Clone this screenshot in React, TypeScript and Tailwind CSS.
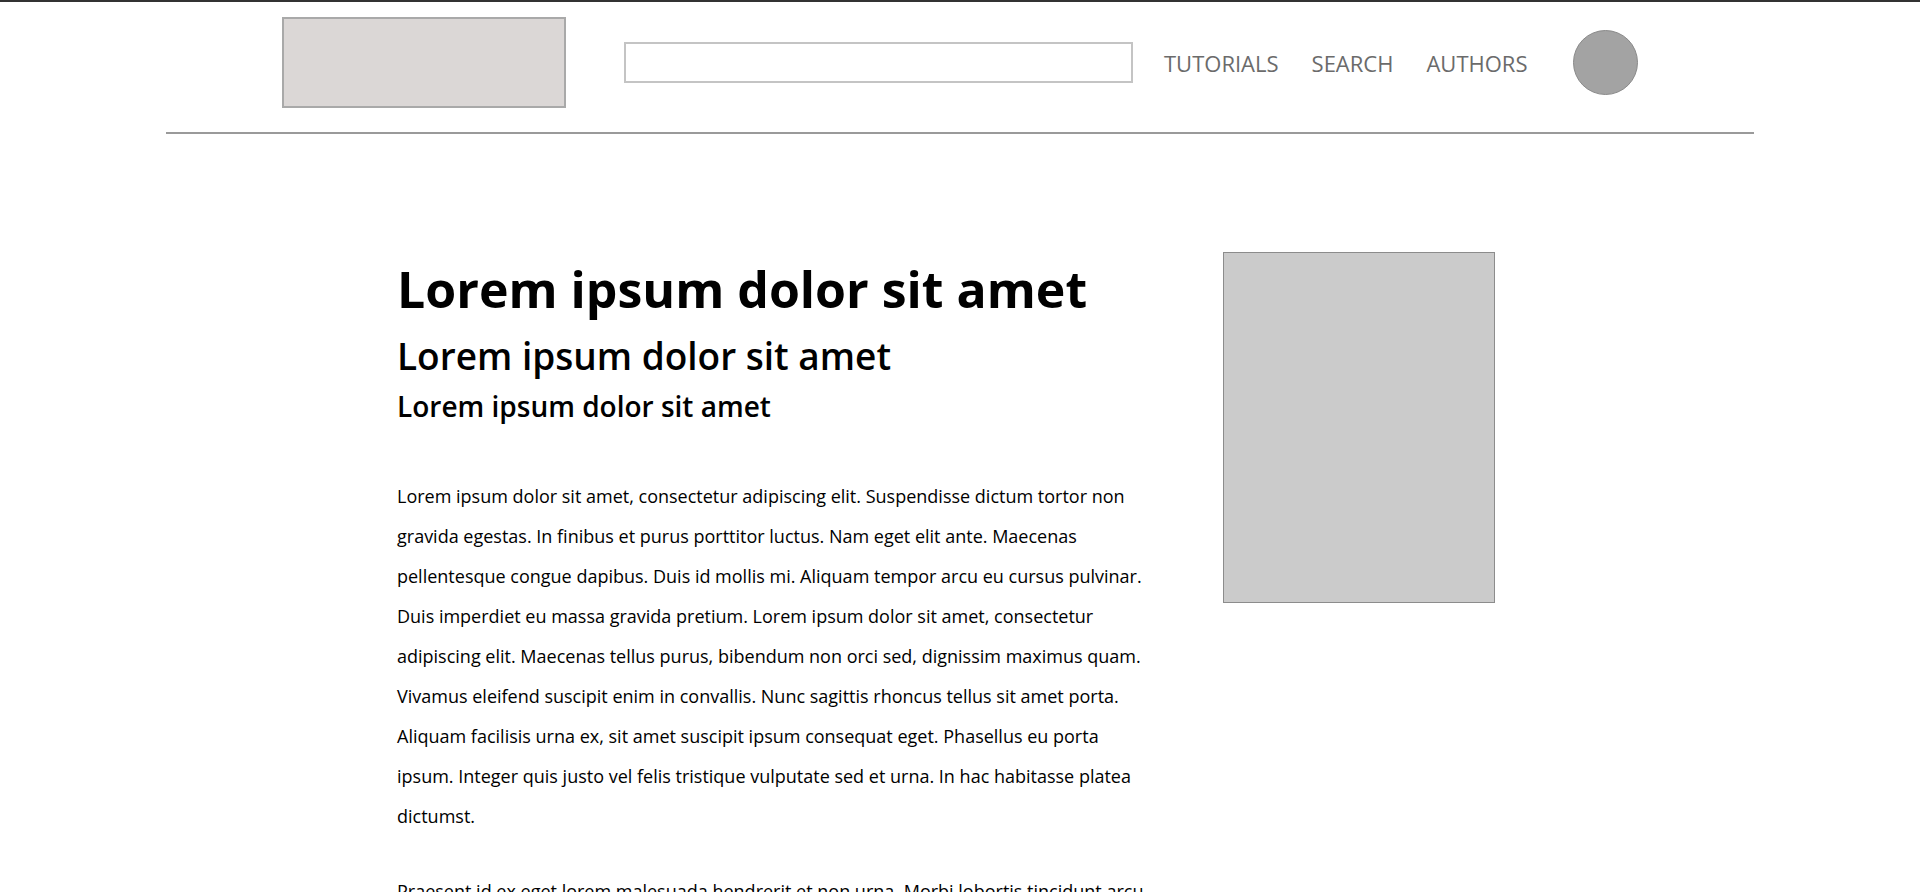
import React from 'react';

const NAV_LINKS = ['TUTORIALS', 'SEARCH', 'AUTHORS'];

const PARAGRAPHS = [
    'Lorem ipsum dolor sit amet, consectetur adipiscing elit. Suspendisse dictum tortor non gravida egestas. In finibus et purus porttitor luctus. Nam eget elit ante. Maecenas pellentesque congue dapibus. Duis id mollis mi. Aliquam tempor arcu eu cursus pulvinar. Duis imperdiet eu massa gravida pretium. Lorem ipsum dolor sit amet, consectetur adipiscing elit. Maecenas tellus purus, bibendum non orci sed, dignissim maximus quam. Vivamus eleifend suscipit enim in convallis. Nunc sagittis rhoncus tellus sit amet porta. Aliquam facilisis urna ex, sit amet suscipit ipsum consequat eget. Phasellus eu porta ipsum. Integer quis justo vel felis tristique vulputate sed et urna. In hac habitasse platea dictumst.',
    'Praesent id ex eget lorem malesuada hendrerit et non urna. Morbi lobortis tincidunt arcu, vel fermentum lorem posuere at. Sed sit amet magna vitae nisl placerat tempor. Donec vel ligula non purus aliquet lacinia. Curabitur viverra lectus ac eros dictum, a cursus justo iaculis.',
];

const Header = () => (
    <header className="w-[1588px] mx-auto flex items-center pl-[116px] pt-[15px] pb-[24px] border-b-2 border-[#9a9a9a]">
        {/* Logo placeholder */}
        <div className="w-[284px] h-[91px] bg-[#dbd7d6] border-2 border-[#a9a9a9]" />
        <input
            type="text"
            className="ml-[58px] w-[509px] h-[41px] border-2 border-[#c4c4c4] outline-none px-2"
        />
        <nav className="ml-[31px] flex gap-[33px]">
            {NAV_LINKS.map(link => (
                <a key={link} href="#" className="text-[22px] text-[#6b6b6b] leading-none">
                    {link}
                </a>
            ))}
        </nav>
        <div className="ml-[46px] w-[65px] h-[65px] rounded-full bg-[#a3a3a3] border border-[#8a8a8a]" />
    </header>
);

const App = () => {
    return (
        <div
            className="min-h-screen bg-white border-t-2 border-[#333333] text-black"
            style={{ fontFamily: '"Open Sans", "Noto Sans", sans-serif' }}
        >
            <Header />

            <main className="flex items-start pl-[397px] pt-[118px]">
                {/* Article body */}
                <article className="w-[754px] pt-[7px]">
                    <h1 className="text-[50px] font-bold leading-[60px]">Lorem ipsum dolor sit amet</h1>
                    <h2 className="mt-[14px] text-[37px] font-semibold leading-[46px]">Lorem ipsum dolor sit amet</h2>
                    <h3 className="mt-[9px] text-[28px] font-semibold leading-[36px]">Lorem ipsum dolor sit amet</h3>
                    <div className="mt-[52px] flex flex-col gap-[35px]">
                        {PARAGRAPHS.map((p, i) => (
                            <p key={i} className="text-[18px] leading-[40px]">{p}</p>
                        ))}
                    </div>
                </article>

                {/* Image placeholder */}
                <div className="ml-[72px] w-[272px] h-[351px] bg-[#cbcbcb] border border-[#8c8c8c]" />
            </main>
        </div>
    );
};

export default App;
